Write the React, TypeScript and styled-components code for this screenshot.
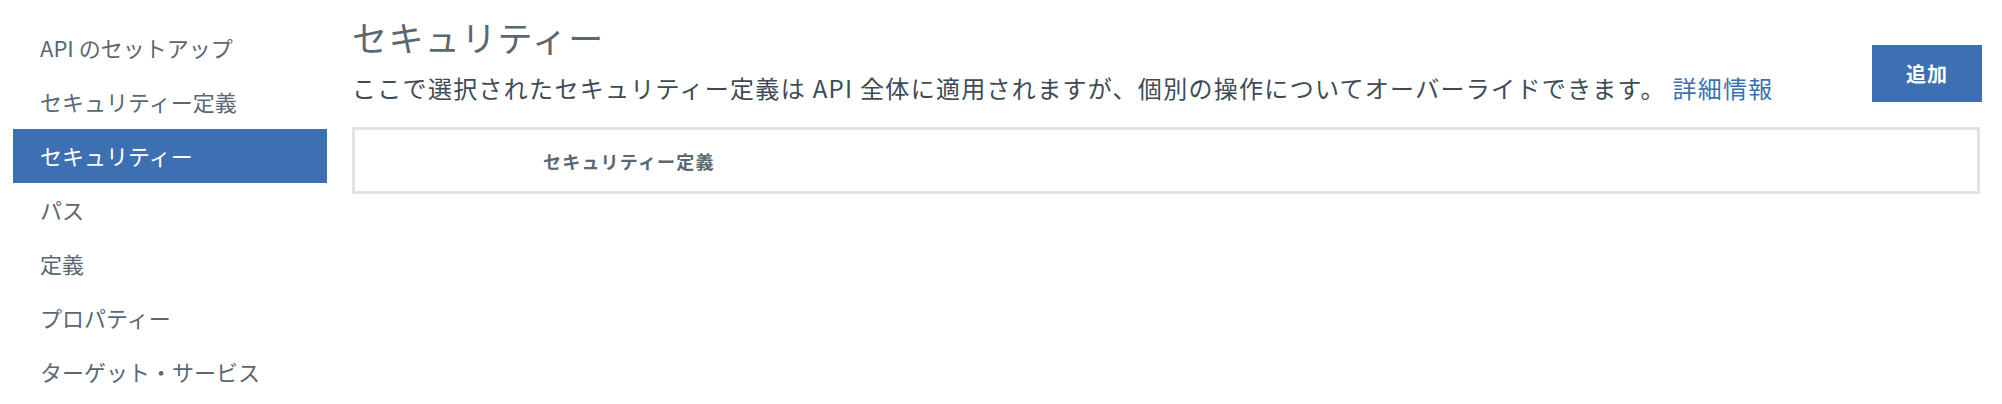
import React, { useState } from 'react';
import styled, { createGlobalStyle } from 'styled-components';

const GlobalStyle = createGlobalStyle`
    html, body {
        margin: 0;
        padding: 0;
        background: #ffffff;
        font-family: "Noto Sans CJK JP", "Noto Sans", sans-serif;
    }
`;

const Page = styled.div`
    display: flex;
    gap: 25px;
    padding: 0 20px 0 13px;
    width: 100%;
    box-sizing: border-box;
`;

const Sidebar = styled.nav`
    display: flex;
    flex-direction: column;
    width: 314px;
    flex-shrink: 0;
    padding-top: 21px;
`;

const NavItem = styled.div<{ $active?: boolean }>`
    height: 54px;
    box-sizing: border-box;
    display: flex;
    align-items: center;
    padding: 0 0 3px 27px;
    font-size: 22px;
    color: ${(p) => (p.$active ? '#ffffff' : '#5a6872')};
    background: ${(p) => (p.$active ? '#3d70b2' : 'transparent')};
    cursor: pointer;
    white-space: nowrap;
`;

const Main = styled.main`
    flex: 1;
    display: flex;
    flex-direction: column;
    padding-top: 15px;
    min-width: 0;
`;

const HeaderRow = styled.div`
    display: flex;
    justify-content: space-between;
    align-items: flex-start;
`;

const Heading = styled.div`
    display: flex;
    flex-direction: column;
    gap: 13px;
`;

const Title = styled.h1`
    margin: 0;
    font-size: 35px;
    line-height: 44px;
    font-weight: 400;
    letter-spacing: 1.4px;
    color: #5a6872;
`;

const Description = styled.p`
    margin: 0;
    font-size: 24px;
    line-height: 32px;
    letter-spacing: 1.3px;
    color: #3d4b55;
    white-space: nowrap;
`;

const Link = styled.a`
    color: #3d70b2;
    text-decoration: none;
    cursor: pointer;
`;

const AddButton = styled.button`
    margin-top: 30px;
    width: 110px;
    height: 57px;
    border: none;
    background: #3d70b2;
    color: #ffffff;
    font-family: inherit;
    font-size: 20px;
    font-weight: 700;
    letter-spacing: 1px;
    cursor: pointer;
`;

const Table = styled.div`
    margin-top: 23px;
    margin-right: 2px;
    border: 3px solid #dfe3e6;
    height: 61px;
    display: grid;
    grid-template-columns: 188px 1fr;
    align-items: center;
`;

const HeaderCell = styled.div`
    font-size: 18px;
    font-weight: 700;
    letter-spacing: 1.2px;
    color: #5a6872;
`;

const navItems = [
    'API のセットアップ',
    'セキュリティー定義',
    'セキュリティー',
    'パス',
    '定義',
    'プロパティー',
    'ターゲット・サービス',
];

export default function App() {
    const [active, setActive] = useState('セキュリティー');

    return (
        <>
            <GlobalStyle />
            <Page>
                <Sidebar>
                    {navItems.map((item) => (
                        <NavItem key={item} $active={item === active} onClick={() => setActive(item)}>
                            {item}
                        </NavItem>
                    ))}
                </Sidebar>
                <Main>
                    <HeaderRow>
                        <Heading>
                            <Title>セキュリティー</Title>
                            <Description>
                                ここで選択されたセキュリティー定義は API 全体に適用されますが、個別の操作についてオーバーライドできます。 <Link>詳細情報</Link>
                            </Description>
                        </Heading>
                        <AddButton>追加</AddButton>
                    </HeaderRow>
                    <Table>
                        <div />
                        <HeaderCell>セキュリティー定義</HeaderCell>
                    </Table>
                </Main>
            </Page>
        </>
    );
}
